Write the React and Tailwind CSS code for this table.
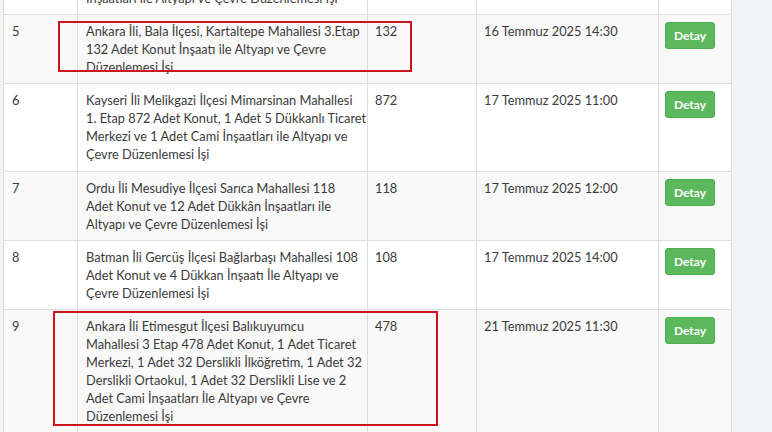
import React from 'react'

const rows = [
    { no: 4, lines: ['İnşaatları ile Altyapı ve Çevre Düzenlemesi İşi'], count: '', date: '', hidden: true },
    {
        no: 5,
        lines: ['Ankara İli, Bala İlçesi, Kartaltepe Mahallesi 3.Etap', '132 Adet Konut İnşaatı ile Altyapı ve Çevre', 'Düzenlemesi İşi'],
        count: '132',
        date: '16 Temmuz 2025 14:30',
    },
    {
        no: 6,
        lines: ['Kayseri İli Melikgazi İlçesi Mimarsinan Mahallesi', '1. Etap 872 Adet Konut, 1 Adet 5 Dükkanlı Ticaret', 'Merkezi ve 1 Adet Cami İnşaatları ile Altyapı ve', 'Çevre Düzenlemesi İşi'],
        count: '872',
        date: '17 Temmuz 2025 11:00',
        tall: true,
    },
    {
        no: 7,
        lines: ['Ordu İli Mesudiye İlçesi Sarıca Mahallesi 118', 'Adet Konut ve 12 Adet Dükkân İnşaatları ile', 'Altyapı ve Çevre Düzenlemesi İşi'],
        count: '118',
        date: '17 Temmuz 2025 12:00',
    },
    {
        no: 8,
        lines: ['Batman İli Gercüş İlçesi Bağlarbaşı Mahallesi 108', 'Adet Konut ve 4 Dükkan İnşaatı İle Altyapı ve', 'Çevre Düzenlemesi İşi'],
        count: '108',
        date: '17 Temmuz 2025 14:00',
    },
    {
        no: 9,
        lines: [
            'Ankara İli Etimesgut İlçesi Balıkuyumcu',
            'Mahallesi 3 Etap 478 Adet Konut, 1 Adet Ticaret',
            'Merkezi, 1 Adet 32 Derslikli İlköğretim, 1 Adet 32',
            'Derslikli Ortaokul, 1 Adet 32 Derslikli Lise ve 2',
            'Adet Cami İnşaatları İle Altyapı ve Çevre',
            'Düzenlemesi İşi',
        ],
        count: '478',
        date: '21 Temmuz 2025 11:30',
    },
]

const App = () => {
    return (
        <div className="relative w-[772px] h-[432px] overflow-hidden bg-[#f1f3f6] pl-[3px] font-['Lato','Liberation_Sans',sans-serif] text-[12.8px] leading-[18px] text-[#3a3a3a]">
            <table className="mt-[-19px] w-[728px] table-fixed border-collapse bg-white">
                <colgroup>
                    <col className="w-[74px]" />
                    <col className="w-[290px]" />
                    <col className="w-[109px]" />
                    <col className="w-[182px]" />
                    <col className="w-[73px]" />
                </colgroup>
                <tbody>
                    {rows.map((row, i) => (
                        <tr key={row.no} className={i % 2 === 1 ? 'bg-[#f9f9f9]' : 'bg-white'}>
                            <td className="border border-[#dddddd] px-[8px] py-[7px] align-top">{row.hidden ? '' : row.no}</td>
                            <td className={'border border-[#dddddd] pl-[8px] pr-[4px] pt-[7px] align-top whitespace-nowrap ' + (row.tall ? 'pb-[8px]' : 'pb-[7px]')}>
                                {row.lines.map((line, j) => (
                                    <div key={j}>{line}</div>
                                ))}
                            </td>
                            <td className="border border-[#dddddd] px-[7px] py-[7px] align-top">{row.count}</td>
                            <td className="border border-[#dddddd] px-[7px] py-[7px] align-top">{row.date}</td>
                            <td className="border border-[#dddddd] px-[6px] py-[7px] align-top">
                                {!row.hidden && (
                                    <button className="block h-[27px] w-[50px] rounded-[3px] border border-[#4cae4c] bg-[#5cb85c] text-[12px] font-bold text-white">
                                        Detay
                                    </button>
                                )}
                            </td>
                        </tr>
                    ))}
                </tbody>
            </table>

            {/* annotation boxes */}
            <div className="absolute left-[58px] top-[21px] h-[51px] w-[354px] border-2 border-[#d0141f]" />
            <div className="absolute left-[53px] top-[311px] h-[115px] w-[385px] border-2 border-[#d0141f]" />
        </div>
    )
}

export default App
